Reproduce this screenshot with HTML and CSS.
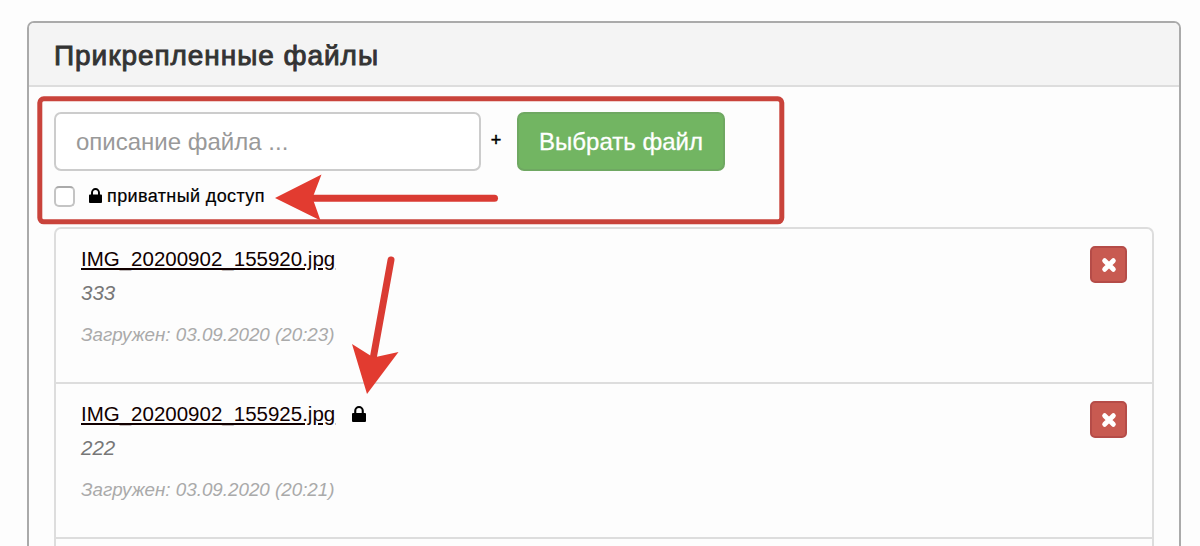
FILE: index.html
```
<!DOCTYPE html>
<html lang="ru">
<head>
  <meta charset="UTF-8">
  <meta name="viewport" content="width=device-width, initial-scale=1.0">
  <title>Прикрепленные файлы</title>
  <link rel="stylesheet" href="styles.css">
</head>
<body>
  <svg width="0" height="0" class="sprite">
    <symbol id="lock" viewBox="0 0 14 16">
      <path fill-rule="evenodd" d="M1 7h1.200V4.800a4.800 4.800 0 0 1 9.600 0V7H13a1 1 0 0 1 1 1v7a1 1 0 0 1-1 1H1a1 1 0 0 1-1-1V8a1 1 0 0 1 1-1zM4.300 7h5.400V4.800a2.700 2.700 0 0 0-5.400 0z"/>
    </symbol>
    <symbol id="times" viewBox="0 0 14 14">
      <path d="M3.200 3.200l7.600 7.600M10.800 3.200l-7.600 7.600" stroke="currentColor" stroke-width="4.300" stroke-linecap="round"/>
    </symbol>
  </svg>

  <div class="panel">
    <div class="panel-heading"><h3>Прикрепленные файлы</h3></div>
    <div class="panel-body">
      <div class="upload">
        <input type="text" class="form-control" placeholder="описание файла ...">
        <span class="plus">+</span>
        <button class="btn btn-success">Выбрать файл</button>
      </div>
      <label class="private">
        <input type="checkbox">
        <svg class="lock"><use href="#lock"/></svg>
        <span>приватный доступ</span>
      </label>

      <ul class="list-group">
        <li>
          <div class="file">
            <div class="name"><a href="#">IMG_20200902_155920.jpg</a></div>
            <em class="desc">333</em>
            <em class="date">Загружен: 03.09.2020 (20:23)</em>
          </div>
          <button class="btn-danger"><svg><use href="#times"/></svg></button>
        </li>
        <li>
          <div class="file">
            <div class="name"><a href="#">IMG_20200902_155925.jpg</a><svg class="lock"><use href="#lock"/></svg></div>
            <em class="desc">222</em>
            <em class="date">Загружен: 03.09.2020 (20:21)</em>
          </div>
          <button class="btn-danger"><svg><use href="#times"/></svg></button>
        </li>
      </ul>
    </div>
  </div>

  <!-- highlight frame and arrows over the panel -->
  <svg class="marks" width="1200" height="546" viewBox="0 0 1200 546">
    <rect x="39.8" y="98.8" width="742" height="123" rx="4" fill="none" stroke="#c9433b" stroke-width="5"/>
    <g fill="#e23b30" stroke="#da3b33" stroke-linecap="round">
      <path d="M494.500 198.300H312" stroke-width="7"/>
      <path d="M275 198L321.500 174.500L312.500 198L320.500 220.500Z" stroke="none"/>
      <path d="M391 260L372.500 362" stroke-width="7"/>
      <path d="M367 394L352 344L373.500 357.500L398.500 352Z" stroke="none"/>
    </g>
  </svg>
</body>
</html>
```

FILE: styles.css
```
* { box-sizing: border-box; }
body {
  margin: 0;
  height: 546px;
  padding: 21px 19px 0 27px;
  background: #fdfdfd;
  color: #000;
  font-family: "Liberation Sans", Arial, sans-serif;
}
.sprite { position: absolute; }
.panel {
  display: flex;
  flex-direction: column;
  height: 525px;
  border: 2px solid #aaa;
  border-bottom: 0;
  border-radius: 7px 7px 0 0;
}
.panel-heading {
  height: 64px;
  padding-left: 25px;
  background: #f4f4f4;
  border-bottom: 2px solid #ddd;
  border-radius: 5px 5px 0 0;
}
h3 {
  margin: 0;
  color: #333;
  font-size: 28px;
  font-weight: normal;
  line-height: 65px;
  letter-spacing: 0.95px;
  -webkit-text-stroke: 0.9px #333;
}
.panel-body {
  display: flex;
  flex-direction: column;
  flex: 1;
  padding: 25px 25px 0;
}
.upload {
  display: flex;
  align-items: center;
}
.form-control {
  width: 427px;
  height: 59px;
  padding: 0 20px;
  background: #fff;
  border: 2px solid #ccc;
  border-radius: 7px;
  font: 24px "Liberation Sans", Arial, sans-serif;
}
.form-control::placeholder { color: #999; }
.plus {
  width: 36px;
  padding-bottom: 3px;
  padding-right: 6px;
  text-align: center;
  font-size: 18px;
  -webkit-text-stroke: 0.5px #000;
}
.btn {
  width: 208px;
  height: 59px;
  padding: 0;
  border-radius: 7px;
  font: 24px "Liberation Sans", Arial, sans-serif;
}
.btn-success {
  color: #fff;
  background: #72b562;
  border: 2px solid #6fa862;
  -webkit-text-stroke: 0.3px #fff;
}
.private {
  display: flex;
  align-items: center;
  height: 20px;
  margin-top: 15px;
  font-size: 18px;
  letter-spacing: 0.38px;
}
.private span {
  padding-top: 1px;
  -webkit-text-stroke: 0.2px #000;
}
.private input {
  appearance: none;
  width: 21px;
  height: 21px;
  margin: 0 14px 0 0;
  background: #fff;
  border: 2px solid #c4c4c4;
  border-top-color: #aaa;
  border-radius: 5px;
}
.lock {
  width: 13px;
  height: 15px;
}
.private .lock {
  margin-right: 5px;
  margin-bottom: 1px;
}
.list-group {
  flex: 1;
  list-style: none;
  margin: 21px 0 0;
  padding: 0;
  border: 2px solid #ddd;
  border-bottom: 0;
  border-radius: 7px 7px 0 0;
}
.list-group li {
  display: flex;
  justify-content: space-between;
  height: 155px;
  padding: 17px 25px 0;
  border-bottom: 2px solid #ddd;
}
.file {
  display: flex;
  flex-direction: column;
}
.name {
  display: flex;
  align-items: center;
  height: 26px;
  font-size: 20.5px;
}
.name a { color: #100; }
.name .lock {
  width: 14px;
  height: 16px;
  margin-left: 17px;
}
.desc {
  color: #777;
  font-size: 20.5px;
  line-height: 41px;
}
.date {
  color: #aaa;
  font-size: 18.8px;
  line-height: 43px;
}
.btn-danger {
  display: flex;
  align-items: center;
  justify-content: center;
  width: 37px;
  height: 37px;
  padding: 0;
  color: #fff;
  background: #c85a51;
  border: 2px solid #b54c48;
  border-radius: 5px;
}
.btn-danger svg {
  width: 16px;
  height: 16px;
}
.marks {
  position: absolute;
  top: 0;
  left: 0;
  pointer-events: none;
}
```
